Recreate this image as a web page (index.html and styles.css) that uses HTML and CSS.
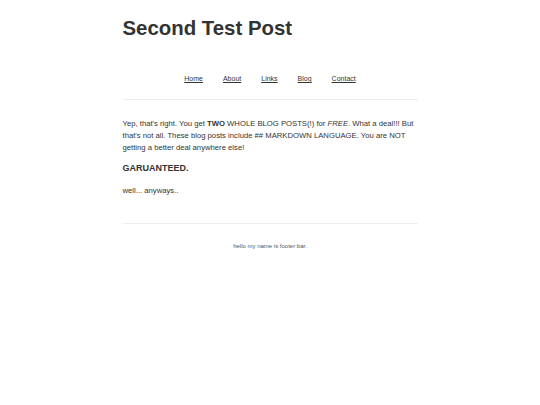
FILE: index.html
```html
<!DOCTYPE html>
<html>
<head>
<meta charset="utf-8">
<link rel="stylesheet" href="styles.css">
</head>
<body>
<div class="wrap">
  <header class="site-header">
    <h1 class="title">Second Test Post</h1>
    <nav class="nav">
      <a href="#">Home</a>
      <a href="#">About</a>
      <a href="#">Links</a>
      <a href="#">Blog</a>
      <a href="#">Contact</a>
    </nav>
  </header>
  <hr class="rule">
  <main class="post">
    <p>Yep, that's right. You get <strong>TWO</strong> WHOLE BLOG POSTS(!) for <em>FREE</em>. What a deal!!! But that's not all. These blog posts include ## MARKDOWN LANGUAGE. You are NOT getting a better deal anywhere else!</p>
    <h2 class="sub">GARUANTEED.</h2>
    <p class="last">well... anyways..</p>
  </main>
  <hr class="rule">
  <footer class="footer">hello my name is footer bar.</footer>
</div>
</body>
</html>
```
FILE: styles.css
```css
html, body {
  margin: 0;
  padding: 0;
  background: #fff;
}
body {
  font-family: "Liberation Sans", Arial, sans-serif;
  color: #333;
}
.wrap {
  width: 295px;
  margin: 0 auto;
}
.title {
  margin: 0;
  padding-top: 15px;
  font-size: 20.4px;
  line-height: 26px;
  font-weight: bold;
  color: #333;
}
.nav {
  display: flex;
  justify-content: center;
  gap: 20px;
  margin-top: 33px;
  font-size: 7px;
  line-height: 10px;
}
.nav a {
  color: #333;
  text-decoration: underline;
}
.rule {
  border: 0;
  border-top: 1px solid #eee;
  margin: 15px 0 0;
  height: 0;
}
.post {
  padding-top: 18px;
  font-size: 7.7px;
  line-height: 12px;
}
.post p {
  margin: 0 0 7px;
}
.post p.last {
  margin-bottom: 0;
  padding-bottom: 11px;
}
.sub {
  font-size: 9px;
  line-height: 14px;
  margin: 0 0 10px;
  font-weight: bold;
}
.footer {
  text-align: center;
  font-size: 6px;
  color: #555;
  padding-top: 19px;
}
```
